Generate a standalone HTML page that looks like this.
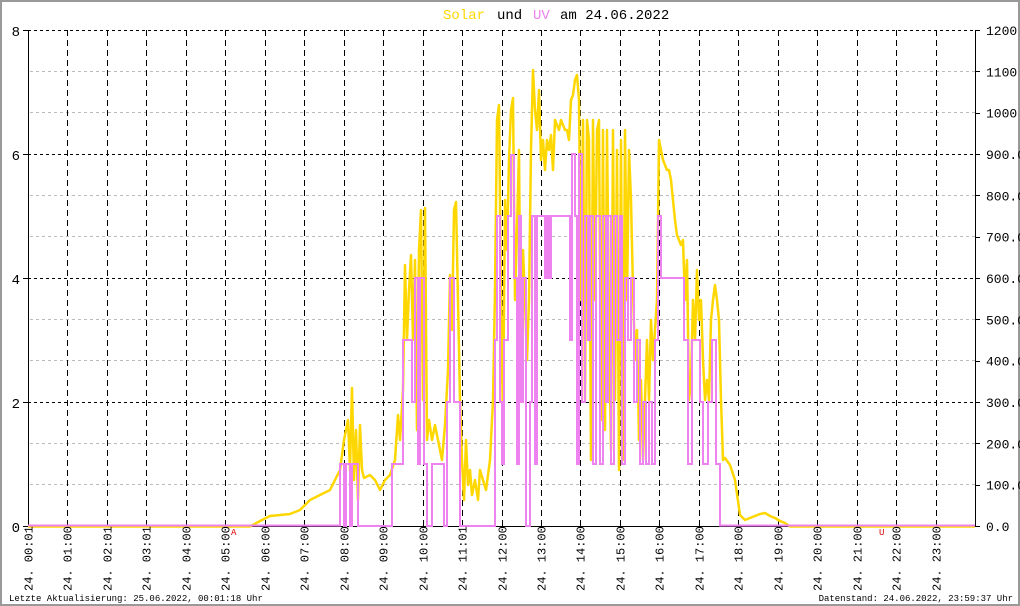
<!DOCTYPE html>
<html><head><meta charset="utf-8"><style>
html,body{margin:0;padding:0;background:#fff}
svg{display:block}
text{font-family:"Liberation Mono",monospace}
</style></head><body>
<svg width="1020" height="606" viewBox="0 0 1020 606" xmlns="http://www.w3.org/2000/svg">
<rect x="1" y="1" width="1018" height="604" fill="#fff" stroke="#999" stroke-width="2"/>
<g id="grid">
<g stroke="#bbb" stroke-width="1" stroke-dasharray="3,3">
<line x1="30" y1="71.5" x2="975" y2="71.5"/><line x1="30" y1="112.5" x2="975" y2="112.5"/>
<line x1="30" y1="195.5" x2="975" y2="195.5"/><line x1="30" y1="236.5" x2="975" y2="236.5"/>
<line x1="30" y1="319.5" x2="975" y2="319.5"/><line x1="30" y1="360.5" x2="975" y2="360.5"/>
<line x1="30" y1="443.5" x2="975" y2="443.5"/><line x1="30" y1="484.5" x2="975" y2="484.5"/>
</g>
<g stroke="#000" stroke-width="1" stroke-dasharray="3,3">
<line x1="28" y1="30.5" x2="975" y2="30.5"/><line x1="28" y1="154.5" x2="975" y2="154.5"/>
<line x1="28" y1="278.5" x2="975" y2="278.5"/><line x1="28" y1="402.5" x2="975" y2="402.5"/>
</g>
<g stroke="#000" stroke-width="1" stroke-dasharray="6,4" id="vl"></g>
</g>
<line x1="28.5" y1="30" x2="28.5" y2="527" stroke="#000"/>
<line x1="975.5" y1="30" x2="975.5" y2="527" stroke="#000"/>
<line x1="23" y1="526.5" x2="980" y2="526.5" stroke="#000"/>
<g stroke="#000"><line x1="23" y1="30.5" x2="28" y2="30.5"/><line x1="23" y1="154.5" x2="28" y2="154.5"/><line x1="23" y1="278.5" x2="28" y2="278.5"/><line x1="23" y1="402.5" x2="28" y2="402.5"/></g>
<g font-size="14" fill="#000" text-anchor="end">
<text x="20" y="36">8</text><text x="20" y="160">6</text><text x="20" y="284">4</text><text x="20" y="408">2</text><text x="20" y="532">0</text>
</g>
<g font-size="13" fill="#000" id="rl"></g>
<polyline fill="none" stroke="#ffd700" stroke-width="2.5" stroke-linejoin="round" points="28,526.5 250,526.5 260,521 270,516 290,514 300,510 310,500 330,490 336,478 340,470 344,440 348,420 350,470 352,388 354,480 356,430 358,500 360,425 362,470 364,478 370,475 375,480 380,490 385,480 390,475 395,460 398,415 400,440 403,390 405,265 407,340 409,290 411,255 413,340 415,260 417,430 419,250 421,210 423,400 425,208 427,440 429,420 432,440 435,425 438,440 442,460 445,425 448,370 450,275 452,330 454,210 456,202 458,300 460,400 462,460 464,500 466,440 468,485 470,470 472,495 475,480 478,500 480,470 483,480 486,490 490,460 493,400 495,290 497,120 499,105 501,300 503,420 505,200 507,250 509,160 511,110 513,98 515,300 517,230 519,150 521,400 523,250 525,300 527,360 529,300 531,150 533,70 535,110 537,130 539,90 541,160 543,140 545,170 547,140 549,150 551,135 553,170 555,120 557,125 559,130 561,120 563,125 565,130 567,130 569,140 571,100 573,95 575,80 577,75 579,100 581,300 583,120 585,400 587,120 589,140 591,460 593,120 595,300 597,130 599,120 601,420 603,130 605,430 607,130 609,320 611,450 613,130 615,400 617,150 619,470 621,140 623,460 625,130 627,300 629,150 631,200 633,290 635,360 637,330 639,440 641,380 643,460 645,400 647,340 649,400 651,320 653,360 655,330 657,300 659,140 661,150 663,160 665,165 667,170 669,170 671,180 673,200 675,220 677,235 679,240 681,245 683,240 685,300 687,260 689,400 691,380 693,300 695,340 697,270 699,320 701,300 703,360 705,400 707,380 709,400 711,320 713,300 715,285 717,300 719,320 721,400 723,460 725,458 730,465 735,480 740,515 745,520 750,518 755,516 760,514 765,513 770,516 775,518 780,521 785,523 790,526.5 975,526.5"/>
<polyline fill="none" stroke="#ee82ee" stroke-width="2" points="28,525.5 340,525.5 340,464 344,464 344,526 346,526 346,464 350,464 350,526 352,526 352,464 358,464 358,526 392,526 392,464 403,464 403,340 412,340 412,402 415,402 415,278 418,278 418,464 420,464 420,278 424,278 424,464 427,464 427,526 432,526 432,464 444,464 444,526 447,526 447,402 450,402 450,278 454,278 454,402 460,402 460,526 495,526 495,340 497,340 497,216 500,216 500,402 502,402 502,464 504,464 504,340 508,340 508,216 511,216 511,155 514,155 514,278 517,278 517,464 519,464 519,216 521,216 521,402 523,402 523,278 526,278 526,526 530,526 530,402 532,402 532,216 535,216 535,464 537,464 537,216 545,216 545,278 547,278 547,216 549,216 549,278 551,278 551,216 570,216 570,340 572,340 572,154 575,154 575,216 577,216 577,464 579,464 579,154 582,154 582,402 585,402 585,216 588,216 588,340 590,340 590,216 593,216 593,464 596,464 596,216 600,216 600,464 603,464 603,216 606,216 606,402 608,402 608,216 611,216 611,464 614,464 614,216 617,216 617,340 620,340 620,216 622,216 622,464 625,464 625,278 628,278 628,340 631,340 631,278 634,278 634,402 637,402 637,340 640,340 640,464 643,464 643,402 646,402 646,464 649,464 649,402 652,402 652,464 655,464 655,340 658,340 658,216 661,216 661,278 684,278 684,340 688,340 688,464 692,464 692,340 700,340 700,402 703,402 703,464 708,464 708,402 712,402 712,340 716,340 716,464 720,464 720,525.5 975,525.5"/>
<g font-size="14"><text x="443" y="19" fill="#ffd700">Solar</text><text x="497" y="19" fill="#000">und</text><text x="533" y="19" fill="#ee82ee">UV</text><text x="560" y="19" fill="#000">am 24.06.2022</text></g>
<text x="231" y="535" font-size="9" fill="#e00000">A</text>
<text x="879" y="535" font-size="9" fill="#e00000">U</text>
<g font-size="12" fill="#000" id="xl"></g>
<g font-size="9" fill="#000"><text x="9" y="601">Letzte Aktualisierung: 25.06.2022, 00:01:18 Uhr</text><text x="1013" y="601" text-anchor="end">Datenstand: 24.06.2022, 23:59:37 Uhr</text></g>
</svg>
<script>
var ns="http://www.w3.org/2000/svg";
var vl=document.getElementById("vl"),xl=document.getElementById("xl"),rl=document.getElementById("rl");
var labs=["00:01","01:00","02:01","03:01","04:00","05:00","06:00","07:00","08:00","09:00","10:00","11:01","12:00","13:00","14:00","15:00","16:00","17:00","18:00","19:00","20:00","21:00","22:00","23:00"];
for(var k=0;k<24;k++){var x=Math.round(28+39.46*k)+0.5;
 if(k>0){var l=document.createElementNS(ns,"line");l.setAttribute("x1",x);l.setAttribute("x2",x);l.setAttribute("y1",30);l.setAttribute("y2",526);vl.appendChild(l);}
 var t=document.createElementNS(ns,"text");t.setAttribute("transform","translate("+(x+4)+",591) rotate(-90)");t.textContent="24. "+labs[k];xl.appendChild(t);}
var rv=["1200","1100","1000","900.0","800.0","700.0","600.0","500.0","400.0","300.0","200.0","100.0","0.0"];
for(var i=0;i<13;i++){var y=30+i*41.333;var t=document.createElementNS(ns,"text");t.setAttribute("x",986);t.setAttribute("y",y+5);t.textContent=rv[i];rl.appendChild(t);
 var l=document.createElementNS(ns,"line");l.setAttribute("x1",975);l.setAttribute("x2",980);l.setAttribute("y1",Math.round(y)+0.5);l.setAttribute("y2",Math.round(y)+0.5);l.setAttribute("stroke","#000");rl.appendChild(l);}
</script>
</body></html>
